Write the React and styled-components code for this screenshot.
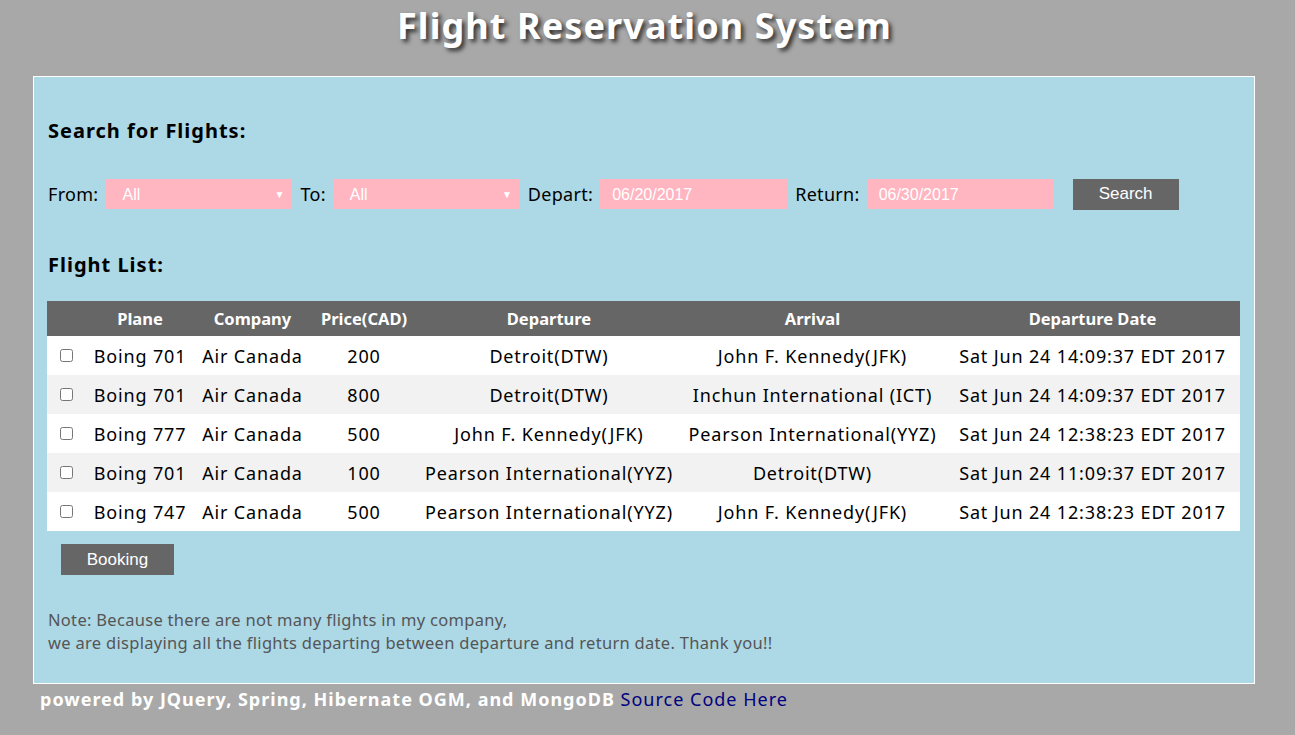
import styled, { createGlobalStyle } from 'styled-components';

const GlobalStyle = createGlobalStyle`
  html, body {
    margin: 0;
    padding: 0;
    background: #a8a8a8;
    font-family: "Noto Sans", "Open Sans", sans-serif;
  }
`;

const Page = styled.div`
  width: 1295px;
  height: 735px;
  overflow: hidden;
  background: #a8a8a8;
`;

const Title = styled.h1`
  margin: 0;
  padding: 2px 6px 0 0;
  height: 50px;
  text-align: center;
  color: white;
  font-size: 36px;
  font-weight: 700;
  letter-spacing: 1.1px;
  line-height: 48px;
  text-shadow: 3px 3px 4px #333;
`;

const Panel = styled.div`
  margin: 24px 0 0 33px;
  width: 1222px;
  height: 608px;
  background: #add8e6;
  border: 1px solid white;
  padding: 0 14px;
  box-sizing: border-box;
`;

const Heading = styled.h2`
  margin: 0;
  font-size: 20px;
  font-weight: 700;
  letter-spacing: 1px;
  color: #000;
  line-height: 28px;
  padding-top: ${(p) => p.$top}px;
`;

const Form = styled.div`
  display: flex;
  align-items: center;
  margin: 34px 0 0 -1px;
  height: 30px;
`;

const Label = styled.span`
  font-size: 18px;
  letter-spacing: 0.3px;
  color: #000;
  margin: 0 7px 0 1px;
`;

const Field = styled.div`
  position: relative;
  width: 187px;
  height: 30px;
  background: #ffb6c1;
  color: white;
  font-family: "Liberation Sans", Arial, sans-serif;
  font-size: 16px;
  line-height: 31px;
  padding-left: ${(p) => (p.$select ? 17 : 12)}px;
  box-sizing: border-box;
  margin-right: 7px;
`;

const Caret = styled.span`
  position: absolute;
  right: 8px;
  top: 0;
  font-size: 10px;
`;

const Button = styled.button`
  background: #666;
  color: white;
  border: none;
  font-family: "Liberation Sans", Arial, sans-serif;
  font-size: 17px;
  height: 31px;
  width: ${(p) => p.$w}px;
  padding: 0;
  margin: ${(p) => p.$m};
`;

const Table = styled.table`
  margin: 22px 0 0 -1px;
  width: 1193px;
  border-collapse: collapse;
  table-layout: fixed;
`;

const Th = styled.th`
  background: #666;
  color: white;
  font-size: 16.5px;
  font-weight: 700;
  height: 35px;
  padding: 0;
  text-align: center;
`;

const Row = styled.tr`
  background: ${(p) => (p.$alt ? '#f2f2f2' : '#fff')};
`;

const Td = styled.td`
  height: 39px;
  padding: 0;
  font-size: 18px;
  letter-spacing: 0.85px;
  color: #000;
  text-align: center;
  white-space: nowrap;
`;

const Check = styled.input`
  margin: 0 0 6px 0;
  width: 13px;
  height: 13px;
`;

const Note = styled.p`
  margin: 33px 0 0 0;
  font-size: 16.5px;
  letter-spacing: 0.3px;
  line-height: 23px;
  color: #555;
`;

const Footer = styled.div`
  padding: 3px 0 0 40px;
  font-size: 18px;
  font-weight: 700;
  letter-spacing: 1px;
  color: white;
  line-height: 24px;
`;

const SourceLink = styled.a`
  font-weight: 400;
  color: #000080;
  text-decoration: none;
`;

const flights = [
  ['Boing 701', 'Air Canada', '200', 'Detroit(DTW)', 'John F. Kennedy(JFK)', 'Sat Jun 24 14:09:37 EDT 2017'],
  ['Boing 701', 'Air Canada', '800', 'Detroit(DTW)', 'Inchun International (ICT)', 'Sat Jun 24 14:09:37 EDT 2017'],
  ['Boing 777', 'Air Canada', '500', 'John F. Kennedy(JFK)', 'Pearson International(YYZ)', 'Sat Jun 24 12:38:23 EDT 2017'],
  ['Boing 701', 'Air Canada', '100', 'Pearson International(YYZ)', 'Detroit(DTW)', 'Sat Jun 24 11:09:37 EDT 2017'],
  ['Boing 747', 'Air Canada', '500', 'Pearson International(YYZ)', 'John F. Kennedy(JFK)', 'Sat Jun 24 12:38:23 EDT 2017'],
];

const widths = [38, 110, 115, 108, 262, 265, 295];
const headers = ['', 'Plane', 'Company', 'Price(CAD)', 'Departure', 'Arrival', 'Departure Date'];

export default function App() {
  return (
    <Page>
      <GlobalStyle />
      <Title>Flight Reservation System</Title>
      <Panel>
        <Heading $top={40}>Search for Flights:</Heading>
        <Form>
          <Label>From:</Label>
          <Field $select>All<Caret>▼</Caret></Field>
          <Label>To:</Label>
          <Field $select>All<Caret>▼</Caret></Field>
          <Label>Depart:</Label>
          <Field>06/20/2017</Field>
          <Label>Return:</Label>
          <Field>06/30/2017</Field>
          <Button $w={106} $m="0 0 0 12px">Search</Button>
        </Form>
        <Heading $top={42}>Flight List:</Heading>
        <Table>
          <colgroup>
            {widths.map((w, i) => <col key={i} style={{ width: w }} />)}
          </colgroup>
          <thead>
            <tr>
              {headers.map((h, i) => <Th key={i}>{h}</Th>)}
            </tr>
          </thead>
          <tbody>
            {flights.map((f, i) => (
              <Row key={i} $alt={i % 2 === 1}>
                <Td><Check type="checkbox" /></Td>
                {f.map((c, j) => <Td key={j}>{c}</Td>)}
              </Row>
            ))}
          </tbody>
        </Table>
        <Button $w={113} $m="13px 0 0 13px">Booking</Button>
        <Note>
          Note: Because there are not many flights in my company,<br />
          we are displaying all the flights departing between departure and return date. Thank you!!
        </Note>
      </Panel>
      <Footer>
        powered by JQuery, Spring, Hibernate OGM, and MongoDB <SourceLink href="#">Source Code Here</SourceLink>
      </Footer>
    </Page>
  );
}
